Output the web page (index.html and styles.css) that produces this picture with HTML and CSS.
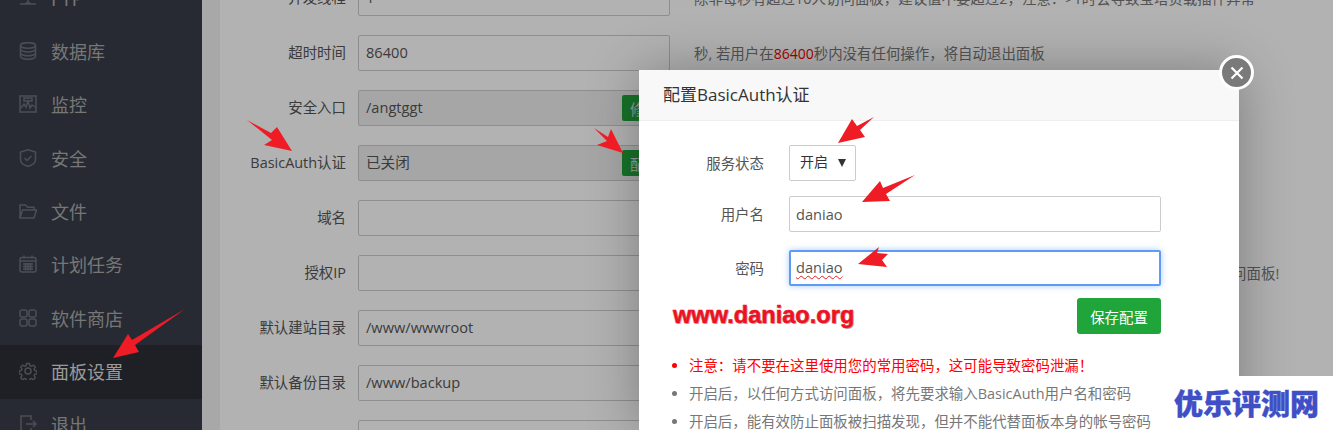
FILE: index.html
```html
<!DOCTYPE html>
<html lang="zh-CN">
<head>
<meta charset="utf-8">
<title>面板设置</title>
<link rel="stylesheet" href="styles.css">
</head>
<body>
<div class="app">
  <nav class="sidebar">
    <div class="nav-item"><svg class="ico" viewBox="0 0 18 18"><rect x="2" y="2" width="14" height="7" rx="1"/><path d="M9 9v4M1 15h16M6 15l3-2 3 2"/></svg><span>FTP</span></div>
    <div class="nav-item"><svg class="ico" viewBox="0 0 18 18"><ellipse cx="9" cy="3.5" rx="7.5" ry="2.8"/><path d="M1.500 3.500v11c0 1.500 3.400 2.800 7.500 2.800s7.500-1.300 7.500-2.800v-11M1.500 7.200c0 1.500 3.400 2.800 7.500 2.800s7.500-1.300 7.500-2.800M1.500 11c0 1.500 3.400 2.800 7.500 2.800s7.500-1.300 7.500-2.800"/></svg><span>数据库</span></div>
    <div class="nav-item"><svg class="ico" viewBox="0 0 18 18"><rect x="1" y="1" width="16" height="16"/><path d="M2 13l3-4 2 3 2-6 2 7 2-3 3 2M5 3h8v3H5z"/></svg><span>监控</span></div>
    <div class="nav-item"><svg class="ico" viewBox="0 0 18 18"><path d="M9 .8l7.500 2.200v7.500c0 3.500-3.500 5.800-7.500 7-4-1.200-7.500-3.500-7.500-7V3z"/><path d="M5.500 9l2.500 2.500 4.500-4.500"/></svg><span>安全</span></div>
    <div class="nav-item"><svg class="ico" viewBox="0 0 18 18"><path d="M1 16V3h5.500l2 2.200h6.500V8M1 16l2.500-8h14l-2.500 8z"/></svg><span>文件</span></div>
    <div class="nav-item"><svg class="ico" viewBox="0 0 18 18"><rect x="1" y="2.500" width="16" height="14.500" rx="2"/><path d="M5 .5v3M13 .5v3M1 6h16M4 9h10M4 11.500h10M4 14h10M6.500 8v7.500M9 8v7.500M11.500 8v7.500"/></svg><span>计划任务</span></div>
    <div class="nav-item"><svg class="ico" viewBox="0 0 18 18"><rect x="1" y="1" width="7" height="7" rx="2"/><rect x="10" y="1" width="7" height="7" rx="2"/><rect x="1" y="10" width="7" height="7" rx="2"/><rect x="10" y="10" width="7" height="7" rx="2"/></svg><span>软件商店</span></div>
    <div class="nav-item active"><svg class="ico" viewBox="0 0 18 18"><circle cx="9" cy="9" r="3"/><path d="M7.500 1h3l.5 2.300 1.600.7 2-1.300 2.100 2.100-1.300 2 .7 1.600 2.300.5v3l-2.300.5-.7 1.600 1.300 2-2.100 2.100-2-1.300-1.600.7-.5 2.300h-3l-.5-2.300-1.600-.7-2 1.300-2.100-2.100 1.300-2-.7-1.600-2.300-.5v-3l2.300-.5.7-1.600-1.300-2 2.100-2.100 2 1.300 1.600-.7z" transform="translate(.5 .5) scale(.95)"/></svg><span>面板设置</span></div>
    <div class="nav-item"><svg class="ico" viewBox="0 0 18 18"><path d="M12 5V1H2v16h10v-4M7 9h10M14 6l3 3-3 3"/></svg><span>退出</span></div>
  </nav>
  <main class="main">
    <div class="panel">
      <div class="row"><label class="lbl">并发线程</label><div class="field">1</div><p class="help">除非每秒有超过10人访问面板，建议值不要超过2，注意：&gt;1时会导致宝塔负载插件异常</p></div>
      <div class="row"><label class="lbl">超时时间</label><div class="field">86400</div><p class="help">秒, 若用户在<em class="num">86400</em>秒内没有任何操作，将自动退出面板</p></div>
      <div class="row"><label class="lbl">安全入口</label><div class="field locked">/angtggt<button class="act">修改</button></div></div>
      <div class="row"><label class="lbl">BasicAuth认证</label><div class="field locked">已关闭<button class="act">配置</button></div></div>
      <div class="row"><label class="lbl">域名</label><div class="field"></div></div>
      <div class="row"><label class="lbl">授权IP</label><div class="field"></div><p class="help">设置访问授权 IP，多个请使用逗号(,)隔开，一旦设置授权 IP，只有指定 IP的电脑能访问面板!</p></div>
      <div class="row"><label class="lbl">默认建站目录</label><div class="field">/www/wwwroot</div></div>
      <div class="row"><label class="lbl">默认备份目录</label><div class="field">/www/backup</div></div>
      <div class="row"><label class="lbl"></label><div class="field"></div></div>
    </div>
  </main>
</div>

<div class="shade"></div>

<section class="modal">
  <header class="modal-head">配置BasicAuth认证</header>
  <a class="close"><svg viewBox="0 0 16 16"><path d="M2.500 2.500l11 11M13.500 2.500l-11 11"/></svg></a>
  <div class="modal-body">
    <div class="f-row"><span class="f-lbl">服务状态</span><div class="f-select">开启<i class="caret"></i></div></div>
    <div class="f-row"><span class="f-lbl">用户名</span><div class="f-input">daniao</div></div>
    <div class="f-row"><span class="f-lbl">密码</span><div class="f-input focus"><span class="spell">daniao</span></div></div>
    <div class="f-actions"><strong class="site">www.daniao.org</strong><button class="save">保存配置</button></div>
    <ul class="notes">
      <li class="warn">注意：请不要在这里使用您的常用密码，这可能导致密码泄漏！</li>
      <li>开启后，以任何方式访问面板，将先要求输入BasicAuth用户名和密码</li>
      <li>开启后，能有效防止面板被扫描发现，但并不能代替面板本身的帐号密码</li>
    </ul>
  </div>
</section>

<svg class="arrows" viewBox="0 0 1333 430">
  <polygon points="247,120 271,133 277,127 292,151 264,145 272,140"/>
  <polygon points="594,128 608,137 611,129 623,153 597,145 607,141"/>
  <polygon points="838,143 852,119 857,126 874,117 860,130 865,137"/>
  <polygon points="862,202 880,181 883,188 915,175 886,194 890,201"/>
  <polygon points="858,264 879,247 877,253 888,254 882,260 887,267"/>
  <polygon points="185,309 132,340 128,334 113,358 139,352 135,345"/>
</svg>

<div class="wm-box"></div>
<div class="wm-text">优乐评测网</div>
</body>
</html>
```
FILE: styles.css
```css
* { box-sizing: border-box; }
html, body { margin: 0; height: 430px; overflow: hidden; background: #fff; }
body { font-family: "Open Sans", "Noto Sans CJK SC", sans-serif; font-size: 14.45px; color: #555; }

.app { display: flex; height: 430px; overflow: hidden; }

.sidebar { width: 202px; flex: none; background: #383d48; height: 430px; overflow: hidden; }
.nav-item { display: flex; align-items: center; gap: 14px; height: 53.34px; padding: 0 0 2px 19px; color: #aaa; font-size: 18px; font-family: "Noto Sans CJK SC", sans-serif; }
.nav-item:first-child { margin-top: -28px; }
.nav-item.active { background: #2c2f36; color: #ddd; }
.ico { width: 18px; height: 18px; flex: none; fill: none; stroke: #6c7079; stroke-width: 1.500; }

.main { flex: 1; background: #f1f1f1; padding-left: 18px; height: 430px; overflow: hidden; }
.panel { background: #fff; height: 100%; overflow: hidden; }
.row { display: flex; align-items: center; height: 36px; margin-bottom: 19px; }
.row:first-child { margin-top: -20px; }
.lbl { width: 126px; flex: none; text-align: right; margin: -3px 12px 0 0; color: #555; white-space: nowrap; }
.field { position: relative; width: 312px; flex: none; height: 36px; border: 1px solid #ccc; border-radius: 2px; padding: 0 7px; line-height: 32px; font-size: 14.6px; color: #555; background: #fff; }
.field.locked { background: #eee; }
.act { position: absolute; left: 263px; top: 4px; width: 48px; height: 26px; border: 0; border-radius: 2px 0 0 2px; background: #20a53a; color: #ddd; font: 14.45px "Noto Sans CJK SC", sans-serif; padding: 0 0 0 8px; text-align: left; }
.help { margin: -2px 0 0 24px; white-space: nowrap; color: #777; }
.num { font-style: normal; color: #e00; font-size: 14px; }

.shade { position: absolute; inset: 0; background: rgba(0,0,0,.3); }

.modal { position: absolute; left: 639px; top: 70px; width: 600px; height: 360px; background: #fff; box-shadow: 1px 1px 50px rgba(0,0,0,.3); }
.modal-head { height: 51px; padding-left: 24px; line-height: 50px; font-size: 17px; color: #333; background: #f8f8f8; border-bottom: 1px solid #eee; }
.close { position: absolute; right: -15px; top: -15px; width: 35px; height: 35px; border-radius: 50%; border: 3px solid #fff; background: #7a7a7a; display: flex; align-items: center; justify-content: center; }
.close svg { width: 16px; height: 16px; fill: none; stroke: #fff; stroke-width: 2.200; }
.modal-body { padding: 24px 78px 0 30px; }
.f-row { display: flex; align-items: center; height: 36px; margin-bottom: 18px; }
.f-row:first-child { margin-bottom: 15px; }
.f-lbl { width: 95px; flex: none; text-align: right; margin: -2px 25px 0 0; color: #555; }
.f-select { width: 67px; height: 36px; border: 1px solid #ccc; border-radius: 2px; padding-left: 10px; line-height: 32px; color: #333; position: relative; font-size: 14px; }
.caret { position: absolute; left: 48px; top: 13px; width: 0; height: 0; border-style: solid; border-width: 8px 4px 0; border-color: #333 transparent transparent; }
.f-input { flex: 1; height: 36px; border: 1px solid #ccc; border-radius: 2px; padding-left: 6px; font: 14.6px/34px "Open Sans", sans-serif; color: #555; }
.f-input.focus { border: 2px solid #5d9cf5; padding-left: 5px; line-height: 30px; box-shadow: 0 0 6px rgba(90,155,245,.5); }
.spell { text-decoration: underline wavy #e02020 1px; text-underline-offset: 2px; }
.f-actions { display: flex; align-items: center; justify-content: space-between; margin-top: -6px; height: 36px; padding-left: 4px; }
.site { font: bold 23.6px/36px "Liberation Sans", sans-serif; color: #ee1122; -webkit-text-stroke: .5px #ee1122; text-shadow: 1px 1px 0 #bbb, -1px 0 0 #eee; margin-top: -2px; }
.save { width: 84px; height: 36px; border: 0; border-radius: 3px; background: #20a53a; color: #fff; font: 14.45px "Noto Sans CJK SC", sans-serif; padding: 0; }
.notes { margin: 18px 0 0; padding: 0 0 0 20px; width: 540px; color: #777; line-height: 28px; white-space: nowrap; }
.notes .warn { color: #f00; }

.arrows { position: absolute; left: 0; top: 0; width: 1333px; height: 430px; fill: #ef1c25; }

.wm-box { position: absolute; left: 1239px; top: 376px; width: 94px; height: 54px; background: #fff; }
.wm-text { position: absolute; left: 1174px; top: 382px; font: 900 29px/40px "Noto Sans CJK SC", sans-serif; color: #3f4fc6; -webkit-text-stroke: .4px #3f4fc6; white-space: nowrap; }
```
